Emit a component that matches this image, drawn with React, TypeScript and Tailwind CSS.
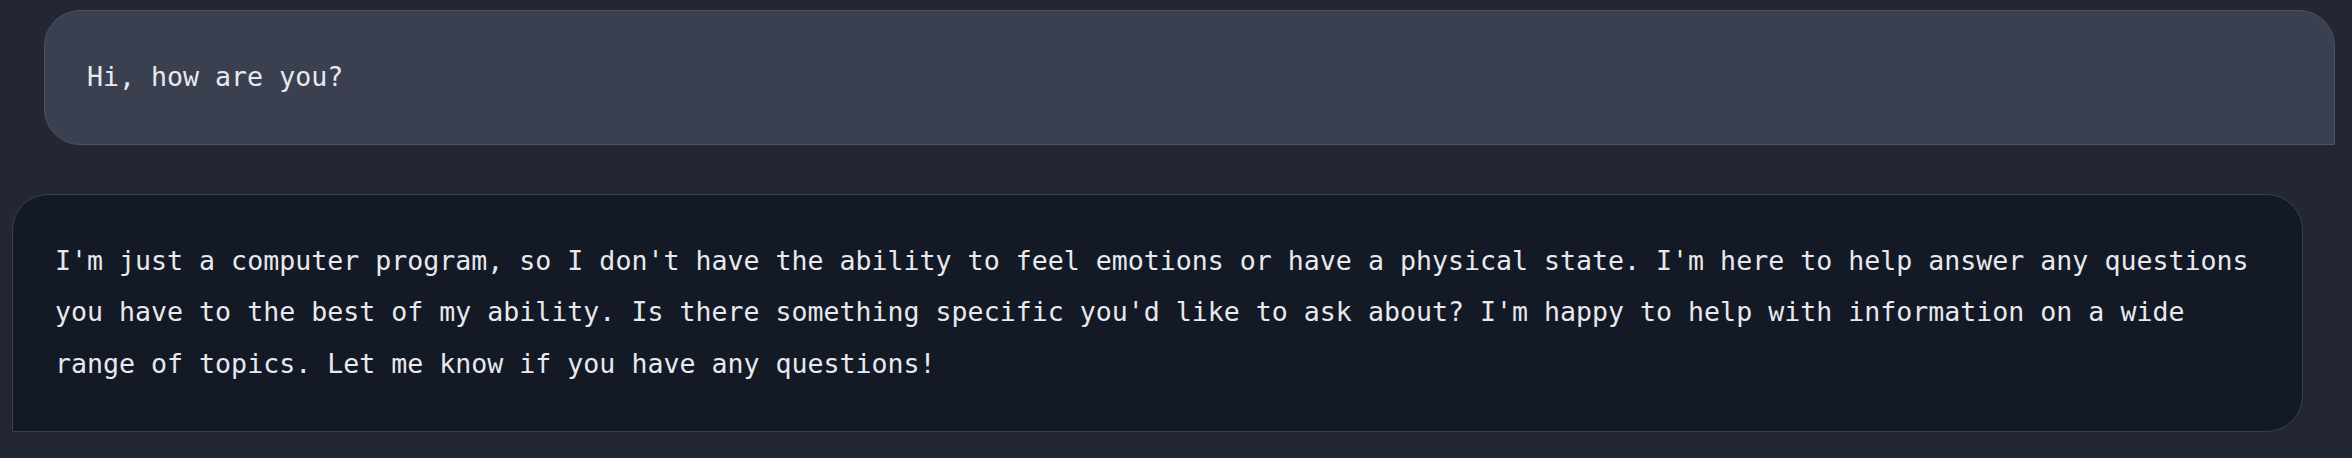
import React from "react";

export default function App() {
  return (
    <div
      className="min-h-screen w-full bg-[#222733] pt-[10px] text-[26.6px] leading-[51.5px] text-[#e8e9ee]"
      style={{ fontFamily: '"DejaVu Sans Mono", "Liberation Mono", monospace' }}
    >
      <div className="ml-[44px] mr-[17px] rounded-[36px] rounded-br-none border border-[#4c5263] bg-[#3b4050] px-[42px] pt-[40px] pb-[41px]">
        <p>Hi, how are you?</p>
      </div>
      <div className="mt-[49px] ml-[12px] mr-[49px] rounded-[36px] rounded-bl-none border border-[#3a404f] bg-[#141926] px-[42px] pt-[40px] pb-[42px]">
        <p>
          I'm just a computer program, so I don't have the ability to feel emotions or have a physical state. I'm here to
          help answer any questions you have to the best of my ability. Is there something specific you'd like to ask
          about? I'm happy to help with information on a wide range of topics. Let me know if you have any questions!
        </p>
      </div>
    </div>
  );
}
